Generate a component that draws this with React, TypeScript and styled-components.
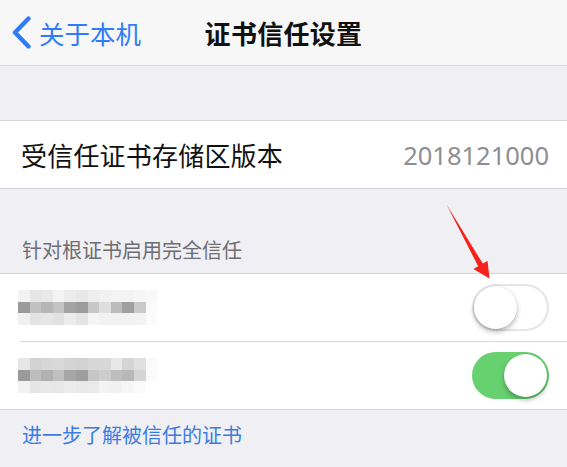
import { FunctionComponent } from "react";
import styled, { createGlobalStyle } from "styled-components";

const GlobalStyle = createGlobalStyle`
    html, body {
        margin: 0;
        padding: 0;
        background-color: #efeff4;
    }

    body {
        font-family: "Noto Sans CJK SC", "Noto Sans", sans-serif;
        -webkit-font-smoothing: antialiased;
    }
`;

const Page = styled.div`
    position: relative;
    width: 567px;
    height: 467px;
    overflow: hidden;
    background-color: #efeff4;
`;

const NavBar = styled.div`
    display: grid;
    grid-template-columns: 1fr auto 1fr;
    align-items: center;
    height: 66px;
    background-color: #f7f7f8;
    border-bottom: 1px solid #d9d9dd;
    box-sizing: border-box;
`;

const BackButton = styled.div`
    display: flex;
    align-items: center;
    gap: 7px;
    padding-left: 12px;
    color: #2f7cf6;
    font-size: 25.5px;
    line-height: 1;
`;

const Title = styled.div`
    font-size: 26px;
    font-weight: 600;
    color: #111;
    letter-spacing: 0.3px;
`;

const Spacer = styled.div<{ $height: number }>`
    height: ${(props) => props.$height}px;
`;

const Group = styled.div`
    background-color: #ffffff;
    border-top: 1px solid #d6d6da;
    border-bottom: 1px solid #d6d6da;
`;

const Row = styled.div`
    display: flex;
    align-items: center;
    justify-content: space-between;
    height: 67px;
    padding: 0 18px 0 21px;
    position: relative;

    & + & {
        border-top: 1px solid #d9d9de;
        margin-left: 20px;
        padding-left: 1px;
    }
`;

const Label = styled.span`
    font-size: 26px;
    color: #111;
    letter-spacing: 0.2px;
`;

const Value = styled.span`
    font-family: "Noto Sans", "Liberation Sans", sans-serif;
    font-size: 25.5px;
    color: #8e8e93;
`;

const SectionHeader = styled.div`
    display: flex;
    align-items: flex-end;
    height: 84px;
    padding: 0 0 9px 22px;
    box-sizing: border-box;
    font-size: 20px;
    color: #6d6d72;
`;

const FooterLink = styled.div`
    padding: 10px 0 0 22px;
    font-size: 20px;
    color: #3a7de0;
`;

const Toggle = styled.div<{ $on: boolean }>`
    display: flex;
    justify-content: ${(props) => (props.$on ? "flex-end" : "flex-start")};
    align-items: center;
    width: 77px;
    height: 47px;
    padding: 2px;
    box-sizing: border-box;
    border-radius: 24px;
    background-color: ${(props) => (props.$on ? "#67d170" : "#ffffff")};
    box-shadow: ${(props) => (props.$on ? "none" : "inset 0 0 0 2px #e5e5e7")};
`;

const Knob = styled.div`
    width: 43px;
    height: 43px;
    border-radius: 50%;
    background-color: #ffffff;
    box-shadow: 0 3px 5px rgba(0, 0, 0, 0.28), 0 0 0 0.5px rgba(0, 0, 0, 0.08);
`;

const Mosaic = styled.div`
    display: grid;
    grid-template-columns: repeat(12, 11.6px);
    grid-auto-rows: 11.7px;
    margin-left: -3px;
`;

const Cell = styled.div`
    width: 100%;
    height: 100%;
`;

const Arrow = styled.svg`
    position: absolute;
    left: 0;
    top: 0;
    width: 567px;
    height: 467px;
    pointer-events: none;
`;

const mosaicA = [
    ["#f2f2f2", "#e6e6e6", "#e9e9e9", "#f3f3f3", "#ececec", "#e8e8e8", "#eeeeee", "#f1f1f1", "#f4f4f4", "#f3f3f3", "#f6f6f6", "#f8f8f8"],
    ["#9b9b9b", "#c1c1c1", "#b6b6b6", "#c3c3c3", "#a3a3a3", "#9c9c9c", "#c7c7c7", "#dedede", "#bcbcbc", "#9f9f9f", "#cacaca", "#fafafa"],
    ["#f0f0f0", "#e3e3e3", "#e6e6e6", "#e1e1e1", "#ececec", "#e4e4e4", "#f5f5f5", "#f2f2f2", "#f1f1f1", "#f2f2f2", "#f3f3f3", "#fbfbfb"],
];

const mosaicB = [
    ["#e6e6e6", "#d3d3d3", "#d6d6d6", "#d9d9d9", "#d4d4d4", "#d3d3d3", "#d7d7d7", "#d8d8d8", "#e8e8e8", "#d4d4d4", "#e0e0e0", "#fafafa"],
    ["#9a9a9a", "#bdbdbd", "#b1b1b1", "#c0c0c0", "#a6a6a6", "#9e9e9e", "#c6c6c6", "#cdcdcd", "#bebebe", "#b8b8b8", "#d5d5d5", "#fafafa"],
    ["#f2f2f2", "#e5e5e5", "#e8e8e8", "#e7e7e7", "#ececec", "#e9e9e9", "#eaeaea", "#f3f3f3", "#f1f1f1", "#f6f6f6", "#fbfbfb", "#ffffff"],
];

const BlurredName: FunctionComponent<{ cells: string[][] }> = ({ cells }) => (
    <Mosaic>
        {cells.flat().map((color, index) => (
            <Cell key={index} style={{ backgroundColor: color }} />
        ))}
    </Mosaic>
);

const Chevron = () => (
    <svg width="20" height="33" viewBox="0 0 20 33">
        <path d="M16.5 2.5 L3 16.5 L16.5 30.5" fill="none" stroke="#2f7cf6" strokeWidth="4.4" strokeLinecap="round" strokeLinejoin="round" />
    </svg>
);

const App = () => (
    <Page>
        <GlobalStyle />
        <NavBar>
            <BackButton>
                <Chevron />
                <span>关于本机</span>
            </BackButton>
            <Title>证书信任设置</Title>
            <div />
        </NavBar>
        <Spacer $height={54} />
        <Group>
            <Row>
                <Label>受信任证书存储区版本</Label>
                <Value>2018121000</Value>
            </Row>
        </Group>
        <SectionHeader>针对根证书启用完全信任</SectionHeader>
        <Group>
            <Row>
                <BlurredName cells={mosaicA} />
                <Toggle $on={false}>
                    <Knob />
                </Toggle>
            </Row>
            <Row>
                <BlurredName cells={mosaicB} />
                <Toggle $on={true}>
                    <Knob />
                </Toggle>
            </Row>
        </Group>
        <FooterLink>进一步了解被信任的证书</FooterLink>
        <Arrow viewBox="0 0 567 467">
            <polygon points="446.5,204.5 482.8,263.6 487.6,261 489.5,278.5 473.4,269 478.2,266.3" fill="#f5221b" />
        </Arrow>
    </Page>
);

export default App;
